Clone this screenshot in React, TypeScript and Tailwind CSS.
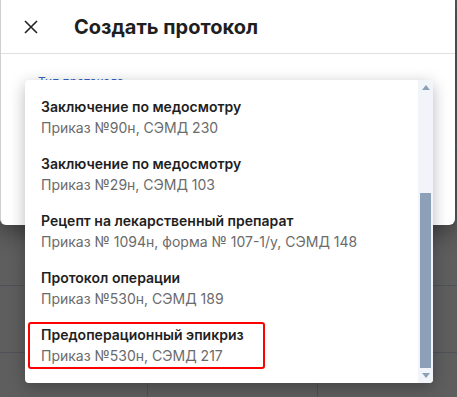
import React from 'react';

// Protocol picker dialog: the "Тип протокола" select is open and scrolled to the end.

interface Option {
  title: string;
  note: string;
  marked?: boolean;
}

const OPTIONS: Option[] = [
  { title: 'Заключение по медосмотру', note: 'Приказ №90н, СЭМД 230' },
  { title: 'Заключение по медосмотру', note: 'Приказ №29н, СЭМД 103' },
  { title: 'Рецепт на лекарственный препарат', note: 'Приказ № 1094н, форма № 107-1/у, СЭМД 148' },
  { title: 'Протокол операции', note: 'Приказ №530н, СЭМД 189' },
  { title: 'Предоперационный эпикриз', note: 'Приказ №530н, СЭМД 217', marked: true },
];

function Backdrop() {
  return (
    <div className="pt-[151px]">
      {[0, 1, 2, 3].map((r) => (
        <div key={r} className="grid grid-cols-[148px_170px_1fr] h-[67px] border-t border-[#4f5158]">
          <div className="border-r border-[#4f5158]" />
          <div className="border-r border-[#4f5158]" />
          <div />
        </div>
      ))}
    </div>
  );
}

function Scrollbar() {
  return (
    <div className="w-[15px] bg-[#f1f4f9] flex flex-col items-center">
      <div className="h-[15px] flex items-center justify-center">
        <svg width="8" height="5" viewBox="0 0 8 5">
          <path d="M0 5 L4 0 L8 5 Z" fill="#8ca0b8" />
        </svg>
      </div>
      <div className="flex-1 w-full px-[2px]">
        <div className="mt-[98px] h-[175px] bg-[#8ca0b8]" />
      </div>
      <div className="h-[15px] flex items-center justify-center">
        <svg width="8" height="5" viewBox="0 0 8 5">
          <path d="M0 0 L8 0 L4 5 Z" fill="#8ca0b8" />
        </svg>
      </div>
    </div>
  );
}

export default function App() {
  return (
    <div
      className="relative w-[457px] h-[397px] overflow-hidden bg-[#5e5e5e]"
      style={{ fontFamily: 'Inter, "Noto Sans", sans-serif' }}
    >
      <Backdrop />

      {/* dialog */}
      <div className="absolute left-0 top-[-10px] w-[455px] h-[235px] bg-white rounded-b-md border-l border-[#cfcfcf] shadow-[0_6px_24px_rgba(0,0,0,0.45)]">
        <div className="h-[64px] pt-[10px] flex items-center border-b border-[#e0e0e0]">
          <svg className="ml-[23px]" width="14" height="14" viewBox="0 0 14 14">
            <path d="M1 1 L13 13 M13 1 L1 13" stroke="#222" strokeWidth="1.6" />
          </svg>
          <h1 className="ml-[36px] text-[20px] leading-none font-bold text-[#1f1f1f]">Создать протокол</h1>
        </div>
        <div className="relative mt-[27px] ml-[24px] mr-[22px] h-[56px] rounded border border-[#2f63c7]">
          <span className="absolute left-[9px] top-[-8px] px-[3px] bg-white text-[12px] leading-4 text-[#2f63c7]">
            Тип протокола
          </span>
        </div>
      </div>

      {/* open select menu */}
      <div className="absolute left-[25px] top-[80px] w-[408px] h-[303px] flex bg-white rounded shadow-[0_4px_16px_rgba(0,0,0,0.28)] overflow-hidden">
        <div className="flex-1 pt-2">
          {OPTIONS.map((o, i) => (
            <div key={i} className="relative h-[57px] pt-[9px] pl-4">
              <div className="text-[14px] leading-5 font-semibold text-[#1f1f1f]">{o.title}</div>
              <div className="mt-[1px] text-[14px] leading-5 text-[#6b6b6b]">{o.note}</div>
              {o.marked && (
                <div className="absolute left-[3px] top-[6px] w-[237px] h-[47px] border-2 border-[#ff0000] rounded-[3px]" />
              )}
            </div>
          ))}
        </div>
        <Scrollbar />
      </div>
    </div>
  );
}
